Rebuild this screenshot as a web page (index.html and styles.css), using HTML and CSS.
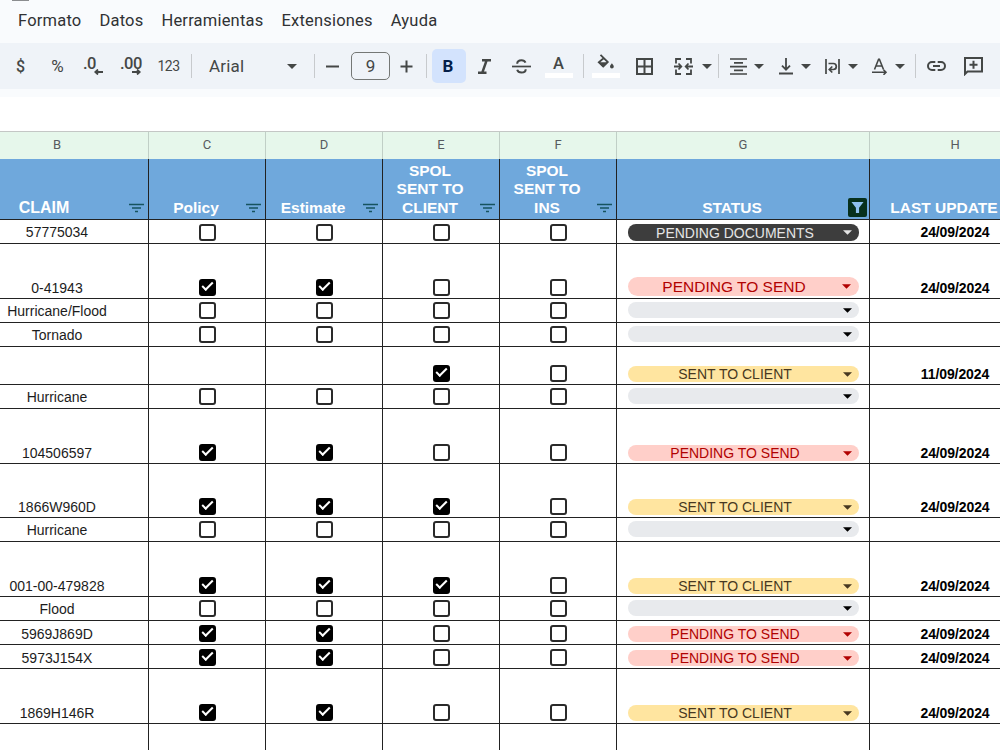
FILE: index.html
```html
<!DOCTYPE html>
<html lang="es">
<head>
    <meta charset="UTF-8">
    <meta name="viewport" content="width=device-width, initial-scale=1.0">
    <title>Claims</title>
    <link rel="stylesheet" href="styles.css">
</head>
<body>
    <svg class="defs">
        <symbol id="filter" viewBox="0 0 15 10"><path d="M0 1.5h15M3 5h9M6 8.5h3" stroke="#17535f" stroke-width="1.5" fill="none"/></symbol>
        <symbol id="caret" viewBox="0 0 10 5"><path d="M0 0h10L5 5z" fill="currentColor"/></symbol>
    </svg>

    <header class="top">
        <span class="logo-edge"></span>
        <nav class="menu">
            <a>Formato</a>
            <a>Datos</a>
            <a>Herramientas</a>
            <a>Extensiones</a>
            <a>Ayuda</a>
        </nav>
    </header>

    <div class="toolbar">
        <span class="btn money">$</span>
        <span class="btn percent">%</span>
        <span class="btn dec one">.0<svg class="arrow left" width="9" height="6" viewBox="0 0 9 6"><path d="M9 3H1.500M4 0.500L1.300 3L4 5.500" /></svg></span>
        <span class="btn dec">.00<svg class="arrow right" width="9" height="6" viewBox="0 0 9 6"><path d="M0 3h7.500M5 0.500L7.700 3L5 5.500" /></svg></span>
        <span class="btn num">123</span>
        <span class="sep after-num"></span>
        <span class="font-select">Arial<svg class="caret" width="10" height="5"><use href="#caret"/></svg></span>
        <span class="sep"></span>
        <span class="btn minus"><svg width="13" height="13" viewBox="0 0 13 13"><path d="M0 6.500h13"/></svg></span>
        <span class="size">9</span>
        <span class="btn plus"><svg width="13" height="13" viewBox="0 0 13 13"><path d="M0.500 6.500h12M6.500 0.500v12"/></svg></span>
        <span class="sep after-plus"></span>
        <span class="btn bold">B</span>
        <span class="btn"><svg width="13" height="15" viewBox="0 0 13 15"><path d="M4 1.300h9M0 13.700h8.500M8.600 1.300L4.300 13.700" stroke-width="2.500"/></svg></span>
        <span class="btn"><svg width="19" height="15" viewBox="0 0 19 15"><path d="M0 7.500h19" stroke-width="1.700"/><path d="M5.200 4.800C5.200 2.700 7 1.300 9.500 1.300c2 0 3.400 0.900 4 2.400M5.200 10.800c0.500 1.700 2 2.800 4.300 2.800 2.600 0 4.200-1.300 4.200-3.300" stroke-width="2"/></svg></span>
        <span class="btn color"><span class="letter">A</span><i class="swatch"></i></span>
        <span class="sep after-color"></span>
        <span class="btn color fill"><svg width="18" height="17" viewBox="0 0 18 17"><path d="M3.500 0.800L10.800 8L6.200 12.600L1.800 8.200L6.900 4" stroke-width="1.800"/><path d="M1.500 8.200h9.800l-5 5z" fill="#444746" stroke="none"/><path d="M14.900 9.200c1 1.300 1.900 2.300 1.900 3.400a1.900 1.900 0 0 1-3.800 0c0-1.100 0.900-2.100 1.900-3.400z" fill="#444746" stroke="none"/></svg><i class="swatch"></i></span>
        <span class="btn borders"><svg width="17" height="17" viewBox="0 0 17 17"><path d="M1 1h15v15H1zM8.500 1v15M1 8.500h15"/></svg></span>
        <span class="btn merge"><svg width="19" height="17" viewBox="0 0 19 17"><path d="M7 1H2v4.500M2 11.500V16h5M12 1h5v4.500M17 11.500V16h-5M0 8.500h7M4.500 5.500l2.800 3l-2.800 3M19 8.500h-7M14.500 5.500l-2.800 3l2.800 3" stroke-width="1.800"/></svg></span>
        <svg class="caret" width="10" height="5"><use href="#caret"/></svg>
        <span class="sep after-merge"></span>
        <span class="group"><svg width="17" height="17" viewBox="0 0 17 17"><path d="M0 1h17M4 4.800h9M0 8.600h17M4 12.300h9M0 16h17" stroke-width="1.700"/></svg></span>
        <svg class="caret grouped" width="10" height="5"><use href="#caret"/></svg>
        <span class="group"><svg width="14" height="17" viewBox="0 0 14 17"><path d="M0 15.500h14M7 0v11.500M3 7.700l4 4l4-4" stroke-width="1.800"/></svg></span>
        <svg class="caret grouped" width="10" height="5"><use href="#caret"/></svg>
        <span class="group"><svg width="15" height="15" viewBox="0 0 15 15"><path d="M1 0v15M14 0v15M3.500 4.500h4.800a3 3 0 0 1 0 6H5M7.300 7.500l-3 3l3 3" stroke-width="1.700"/></svg></span>
        <svg class="caret grouped" width="10" height="5"><use href="#caret"/></svg>
        <span class="group"><svg width="16" height="17" viewBox="0 0 16 17"><path d="M2.500 11.500L6.600 1.300h0.800l4.100 10.200M4 8h6M0 14.300h14M11.500 11.800l2.500 2.500l-2.500 2.500" stroke-width="1.600"/></svg></span>
        <svg class="caret grouped" width="10" height="5"><use href="#caret"/></svg>
        <span class="sep after-rotate"></span>
        <span class="btn link"><svg width="19" height="10" viewBox="0 0 19 10"><path d="M8.300 1H5a4 4 0 0 0 0 8h3.300M10.700 1H14a4 4 0 0 1 0 8h-3.300M6 5h7"/></svg></span>
        <span class="btn"><svg width="19" height="19" viewBox="0 0 19 19"><path d="M1 17V1h17v13.500H3.500zM9.500 3.700v8M5.500 7.700h8"/></svg></span>
    </div>

    <div class="formula"></div>

    <table class="sheet">
        <colgroup>
            <col class="col-claim"><col class="col-check"><col class="col-check"><col class="col-check"><col class="col-check"><col class="col-status"><col class="col-date">
        </colgroup>
        <tr class="letters"><td>B</td><td>C</td><td>D</td><td>E</td><td>F</td><td>G</td><td>H</td></tr>
        <tr class="titles">
            <th><div class="claim">CLAIM<svg><use href="#filter"/></svg></div></th>
            <th><div>Policy<svg><use href="#filter"/></svg></div></th>
            <th><div>Estimate<svg><use href="#filter"/></svg></div></th>
            <th><div>SPOL<br>SENT TO<br>CLIENT<svg><use href="#filter"/></svg></div></th>
            <th><div>SPOL<br>SENT TO<br>INS<svg><use href="#filter"/></svg></div></th>
            <th><div>STATUS<span class="active-filter"><svg viewBox="0 0 14 14"><path d="M0.500 1h13L8.700 7.200V13H5.300V7.200z" fill="#8fc0ee"/></svg></span></div></th>
            <th><div class="update">LAST UPDATE</div></th>
        </tr>
        <tr class="h24 first"><td>57775034</td><td><i class="box"></i></td><td><i class="box"></i></td><td><i class="box"></i></td><td><i class="box"></i></td><td><div class="chip docs">PENDING DOCUMENTS<svg><use href="#caret"/></svg></div></td><td>24/09/2024</td></tr>
        <tr class="h55"><td>0-41943</td><td><i class="box on"></i></td><td><i class="box on"></i></td><td><i class="box"></i></td><td><i class="box"></i></td><td><div class="chip pending large">PENDING TO SEND<svg><use href="#caret"/></svg></div></td><td>24/09/2024</td></tr>
        <tr class="h24 blank"><td>Hurricane/Flood</td><td><i class="box"></i></td><td><i class="box"></i></td><td><i class="box"></i></td><td><i class="box"></i></td><td><div class="chip"><svg><use href="#caret"/></svg></div></td><td></td></tr>
        <tr class="h24 blank"><td>Tornado</td><td><i class="box"></i></td><td><i class="box"></i></td><td><i class="box"></i></td><td><i class="box"></i></td><td><div class="chip"><svg><use href="#caret"/></svg></div></td><td></td></tr>
        <tr class="h38"><td></td><td></td><td></td><td><i class="box on"></i></td><td><i class="box"></i></td><td><div class="chip sent">SENT TO CLIENT<svg><use href="#caret"/></svg></div></td><td>11/09/2024</td></tr>
        <tr class="h24 blank"><td>Hurricane</td><td><i class="box"></i></td><td><i class="box"></i></td><td><i class="box"></i></td><td><i class="box"></i></td><td><div class="chip"><svg><use href="#caret"/></svg></div></td><td></td></tr>
        <tr class="h55"><td>104506597</td><td><i class="box on"></i></td><td><i class="box on"></i></td><td><i class="box"></i></td><td><i class="box"></i></td><td><div class="chip pending">PENDING TO SEND<svg><use href="#caret"/></svg></div></td><td>24/09/2024</td></tr>
        <tr class="h54"><td>1866W960D</td><td><i class="box on"></i></td><td><i class="box on"></i></td><td><i class="box on"></i></td><td><i class="box"></i></td><td><div class="chip sent">SENT TO CLIENT<svg><use href="#caret"/></svg></div></td><td>24/09/2024</td></tr>
        <tr class="h24 blank"><td>Hurricane</td><td><i class="box"></i></td><td><i class="box"></i></td><td><i class="box"></i></td><td><i class="box"></i></td><td><div class="chip"><svg><use href="#caret"/></svg></div></td><td></td></tr>
        <tr class="h55"><td>001-00-479828</td><td><i class="box on"></i></td><td><i class="box on"></i></td><td><i class="box on"></i></td><td><i class="box"></i></td><td><div class="chip sent">SENT TO CLIENT<svg><use href="#caret"/></svg></div></td><td>24/09/2024</td></tr>
        <tr class="h24 blank"><td>Flood</td><td><i class="box"></i></td><td><i class="box"></i></td><td><i class="box"></i></td><td><i class="box"></i></td><td><div class="chip"><svg><use href="#caret"/></svg></div></td><td></td></tr>
        <tr class="h24"><td>5969J869D</td><td><i class="box on"></i></td><td><i class="box on"></i></td><td><i class="box"></i></td><td><i class="box"></i></td><td><div class="chip pending">PENDING TO SEND<svg><use href="#caret"/></svg></div></td><td>24/09/2024</td></tr>
        <tr class="h24"><td>5973J154X</td><td><i class="box on"></i></td><td><i class="box on"></i></td><td><i class="box"></i></td><td><i class="box"></i></td><td><div class="chip pending">PENDING TO SEND<svg><use href="#caret"/></svg></div></td><td>24/09/2024</td></tr>
        <tr class="h55"><td>1869H146R</td><td><i class="box on"></i></td><td><i class="box on"></i></td><td><i class="box"></i></td><td><i class="box"></i></td><td><div class="chip sent">SENT TO CLIENT<svg><use href="#caret"/></svg></div></td><td>24/09/2024</td></tr>
        <tr class="h55"><td></td><td></td><td></td><td></td><td></td><td></td><td></td></tr>
    </table>
</body>
</html>
```
FILE: styles.css
```css
* {
    box-sizing: border-box;
}
body {
    margin: 0;
    height: 750px;
    overflow: hidden;
    background: #fff;
    font-family: "Liberation Sans", Arial, sans-serif;
}
.defs {
    display: none;
}

/* menu */
.top {
    position: relative;
    height: 43px;
    background: #f9fbfd;
}
.logo-edge {
    position: absolute;
    left: 12px;
    top: 0;
    width: 17px;
    height: 1px;
    background: #8b8d8f;
}
.menu {
    display: flex;
    gap: 18px;
    padding: 9px 0 0 18px;
    font-family: Roboto, sans-serif;
    font-size: 16.5px;
    line-height: 24px;
    letter-spacing: 0.2px;
    color: #303234;
}

/* toolbar */
.toolbar {
    display: flex;
    align-items: center;
    height: 46px;
    padding-left: 2px;
    background: #eff3f8;
    color: #444746;
    font-family: Roboto, sans-serif;
}
.toolbar svg {
    fill: none;
    stroke: #444746;
    stroke-width: 2;
}
.toolbar .caret {
    flex: none;
    stroke: none;
}
.btn {
    flex: none;
    display: flex;
    position: relative;
    align-items: center;
    justify-content: center;
    width: 37px;
    height: 34px;
    font-size: 15px;
    font-weight: 500;
}
.money {
    font-size: 16px;
}
.percent {
    font-size: 17px;
    font-weight: 400;
}
.dec {
    padding-bottom: 6px;
    padding-right: 1px;
    font-size: 16.5px;
    letter-spacing: -0.4px;
}
.dec.one {
    padding-right: 10px;
}
.dec .arrow {
    position: absolute;
    top: 20px;
    stroke-width: 1.8;
}
.arrow.left {
    left: 18px;
}
.arrow.right {
    left: 19px;
}
.num {
    font-size: 14px;
    font-weight: 400;
    letter-spacing: -0.5px;
}
.sep {
    flex: none;
    width: 1px;
    height: 24px;
    background: #c7cacd;
}
.after-num {
    margin-left: 4px;
}
.font-select {
    flex: none;
    display: flex;
    align-items: center;
    justify-content: space-between;
    width: 122px;
    padding: 0 17px 0 17px;
    font-size: 17px;
    letter-spacing: 0.2px;
}
.minus {
    width: 35px;
}
.size {
    flex: none;
    width: 39px;
    height: 28px;
    margin-left: 1px;
    border: 1px solid #747775;
    border-radius: 5px;
    text-align: center;
    font-size: 17px;
    line-height: 26px;
}
.plus {
    width: 33px;
}
.after-plus {
    margin-left: 3px;
}
.bold {
    width: 34px;
    margin-left: 5px;
    padding-right: 2px;
    border-radius: 5px;
    background: #d3e3fd;
    color: #041e49;
    font-size: 17px;
    font-weight: 700;
}
.color {
    flex-direction: column;
    justify-content: flex-start;
}
.color .letter {
    margin-top: 6px;
    font-size: 16.5px;
    line-height: 18px;
}
.swatch {
    width: 28px;
    height: 5px;
    background: #fff;
}
.after-color {
    margin-left: 6px;
}
.fill {
    margin-left: 3px;
}
.fill svg {
    margin: 5px 0 2px;
}
.borders {
    width: 40px;
}
.merge {
    width: 38px;
}
.after-merge {
    margin-left: 6px;
    margin-right: 4px;
}
.group {
    flex: none;
    display: flex;
    justify-content: center;
    width: 31px;
}
.caret.grouped {
    margin-right: 6px;
}
.after-rotate {
    margin-left: 4px;
}
.link {
    margin-left: 2px;
}
.formula {
    height: 42px;
    border-top: 8px solid #f9fbfd;
    background: #fff;
}

/* sheet */
.sheet {
    width: 1075px;
    margin-left: -34px;
    table-layout: fixed;
    border-collapse: separate;
    border-spacing: 0;
    font-size: 14px;
    color: #1c1c1c;
}
.col-claim {
    width: 183px;
}
.col-check {
    width: 117px;
}
.col-status {
    width: 253px;
}
.sheet td, .sheet th {
    padding: 0 0 2px;
    border-right: 1px solid #222;
    border-bottom: 1px solid #222;
    text-align: center;
    vertical-align: bottom;
    line-height: 17px;
    white-space: nowrap;
}
.sheet td:first-child, .sheet td:last-child {
    padding-bottom: 1px;
}
.sheet .first td {
    padding-bottom: 2px;
}
.sheet td:last-child {
    font-weight: bold;
    color: #000;
    letter-spacing: -0.1px;
}
.sheet .letters td {
    height: 28px;
    padding: 0 0 2px;
    border-top: 1px solid #c4c7c5;
    border-bottom: 0;
    border-right-color: #c0cfc6;
    background: #e6f7eb;
    color: #575b5f;
    font-family: Roboto, sans-serif;
    font-size: 13px;
    font-weight: 400;
    vertical-align: middle;
}
.sheet .titles th {
    height: 61px;
    background: #6fa8dc;
    color: #fff;
    font-size: 15.5px;
    line-height: 18.5px;
}
.titles div {
    position: relative;
    padding-right: 22px;
}
.titles .claim {
    padding-right: 26px;
    font-size: 16px;
}
.titles div > svg {
    position: absolute;
    right: 4px;
    bottom: 4px;
    width: 15px;
    height: 10px;
}
.active-filter {
    position: absolute;
    right: 2px;
    bottom: 0;
    width: 19px;
    height: 19px;
    padding: 3px;
    border-radius: 2px;
    background: #07301c;
}
.active-filter svg {
    display: block;
    width: 13px;
    height: 13px;
}
.h24 td {
    height: 24px;
}
.h38 td {
    height: 38px;
}
.h54 td {
    height: 54px;
}
.h55 td {
    height: 55px;
}
.sheet .blank td {
    padding-bottom: 3px;
}
.sheet .blank td:first-child {
    padding-bottom: 2px;
}
.sheet .blank td:nth-child(6) {
    padding-bottom: 4px;
}
.box {
    display: block;
    position: relative;
    width: 17px;
    height: 17px;
    margin: 0 auto;
    border: 2px solid #2a2a2a;
    border-radius: 3px;
    background: #fff;
}
.box.on {
    border-color: #000;
    background: #000;
}
.box.on::after {
    content: "";
    box-sizing: border-box;
    position: absolute;
    left: 1px;
    top: 1px;
    width: 11px;
    height: 6px;
    border-left: 2px solid #fff;
    border-bottom: 2px solid #fff;
    transform: rotate(-45deg);
}
.chip {
    position: relative;
    height: 16px;
    margin: 0 10px 0 11px;
    padding-right: 17px;
    border-radius: 8px;
    background: #e8eaed;
    color: #000;
    line-height: 17px;
}
.chip svg {
    position: absolute;
    right: 7px;
    top: 6px;
    width: 9px;
    height: 5px;
}
.chip.docs {
    height: 17px;
    line-height: 18px;
    background: #3d3d3d;
    color: #e5e5e5;
}
.chip.pending {
    background: #ffcfc9;
    color: #b10202;
}
.chip.large {
    height: 19px;
    padding-right: 19px;
    border-radius: 10px;
    font-size: 15.5px;
    line-height: 20px;
}
.chip.large svg {
    top: 7px;
    right: 8px;
}
.chip.sent {
    background: #ffe5a0;
    color: #473821;
}
```
